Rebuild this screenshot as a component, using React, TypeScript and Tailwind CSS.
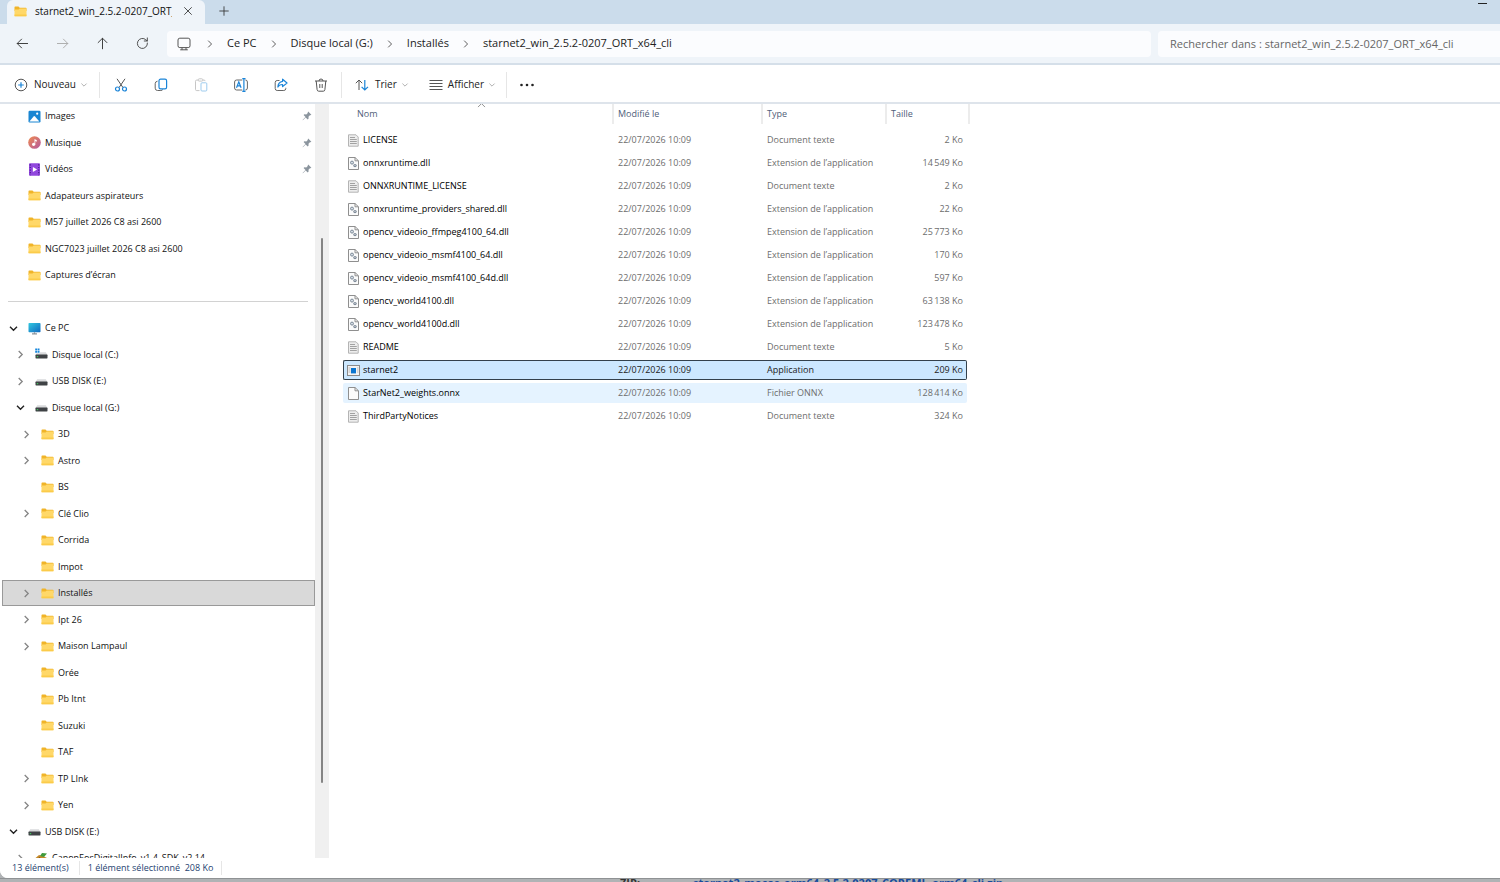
import type { ReactNode } from 'react'

type TreeItem = {
  label: string
  icon: 'images' | 'music' | 'video' | 'folder' | 'pc' | 'system' | 'drive' | 'canon'
  level?: number
  state?: 'open' | 'closed'
  pinned?: boolean
  selected?: boolean
}

const quickAccess: TreeItem[] = [
  { label: 'Images', icon: 'images', pinned: true },
  { label: 'Musique', icon: 'music', pinned: true },
  { label: 'Vidéos', icon: 'video', pinned: true },
  { label: 'Adapateurs aspirateurs', icon: 'folder' },
  { label: 'M57 juillet 2026 C8 asi 2600', icon: 'folder' },
  { label: 'NGC7023 juillet 2026 C8 asi 2600', icon: 'folder' },
  { label: 'Captures d’écran', icon: 'folder' },
]

const tree: TreeItem[] = [
  { label: 'Ce PC', icon: 'pc', state: 'open' },
  { label: 'Disque local (C:)', icon: 'system', level: 1, state: 'closed' },
  { label: 'USB DISK (E:)', icon: 'drive', level: 1, state: 'closed' },
  { label: 'Disque local (G:)', icon: 'drive', level: 1, state: 'open' },
  { label: '3D', icon: 'folder', level: 2, state: 'closed' },
  { label: 'Astro', icon: 'folder', level: 2, state: 'closed' },
  { label: 'BS', icon: 'folder', level: 2 },
  { label: 'Clé Clio', icon: 'folder', level: 2, state: 'closed' },
  { label: 'Corrida', icon: 'folder', level: 2 },
  { label: 'Impot', icon: 'folder', level: 2 },
  { label: 'Installés', icon: 'folder', level: 2, state: 'closed', selected: true },
  { label: 'Ipt 26', icon: 'folder', level: 2, state: 'closed' },
  { label: 'Maison Lampaul', icon: 'folder', level: 2, state: 'closed' },
  { label: 'Orée', icon: 'folder', level: 2 },
  { label: 'Pb Itnt', icon: 'folder', level: 2 },
  { label: 'Suzuki', icon: 'folder', level: 2 },
  { label: 'TAF', icon: 'folder', level: 2 },
  { label: 'TP LInk', icon: 'folder', level: 2, state: 'closed' },
  { label: 'Yen', icon: 'folder', level: 2, state: 'closed' },
  { label: 'USB DISK (E:)', icon: 'drive', state: 'open' },
  { label: 'CanonEosDigitalInfo_v1.4_SDK_v2.14', icon: 'canon', level: 1, state: 'closed' },
]

const TEXT = 'Document texte'
const DLL = 'Extension de l’application'

const files = [
  { name: 'LICENSE', type: TEXT, size: '2 Ko' },
  { name: 'onnxruntime.dll', type: DLL, size: '14\u2009549 Ko' },
  { name: 'ONNXRUNTIME_LICENSE', type: TEXT, size: '2 Ko' },
  { name: 'onnxruntime_providers_shared.dll', type: DLL, size: '22 Ko' },
  { name: 'opencv_videoio_ffmpeg4100_64.dll', type: DLL, size: '25\u2009773 Ko' },
  { name: 'opencv_videoio_msmf4100_64.dll', type: DLL, size: '170 Ko' },
  { name: 'opencv_videoio_msmf4100_64d.dll', type: DLL, size: '597 Ko' },
  { name: 'opencv_world4100.dll', type: DLL, size: '63\u2009138 Ko' },
  { name: 'opencv_world4100d.dll', type: DLL, size: '123\u2009478 Ko' },
  { name: 'README', type: TEXT, size: '5 Ko' },
  { name: 'starnet2', type: 'Application', size: '209 Ko' },
  { name: 'StarNet2_weights.onnx', type: 'Fichier ONNX', size: '128\u2009414 Ko' },
  { name: 'ThirdPartyNotices', type: TEXT, size: '324 Ko' },
]

function Line({ d, size = 14, className = '' }: { d: string; size?: number; className?: string }) {
  return (
    <svg width={size} height={size} viewBox="0 0 14 14" fill="none" stroke="currentColor" strokeLinecap="round" strokeLinejoin="round" className={`shrink-0 ${className}`}>
      <path d={d} />
    </svg>
  )
}

function FolderIcon() {
  return (
    <svg width="13" height="13" viewBox="0 0 13 13" className="shrink-0">
      <path d="M.5 2.2q0-.7.7-.7h3.3l1.2 1.3h6.1q.7 0 .7.7V6H.5z" fill="#f0b429" />
      <path d="M.5 4.6h4l1.2-1.2h6.8v7.3q0 .6-.7.6H1.2q-.7 0-.7-.6z" fill="#ffd869" />
      <path d="M.5 9.5h12v1.2q0 .6-.7.6H1.2q-.7 0-.7-.6z" fill="#fbcb4a" />
    </svg>
  )
}

function DriveIcon({ system = false }: { system?: boolean }) {
  return (
    <svg width="13" height="13" viewBox="0 0 13 13" className="shrink-0">
      <path d="M2.2 4.2h8.6l1.7 3H.5z" fill="#d9dadc" />
      <rect x=".5" y="6.6" width="12" height="3.8" rx=".6" fill="#3f4245" />
      <rect x="1.8" y="8" width="1.4" height="1.2" fill="#3fc35a" />
      {system && (
        <>
          <path d="M0 0h5v5.2H0z" fill="#fff" />
          <path d="M.2.4h1.9v1.9H.2zM2.6.4h1.9v1.9H2.6zM.2 2.8h1.9v1.9H.2zM2.6 2.8h1.9v1.9H2.6z" fill="#1787dc" />
        </>
      )}
    </svg>
  )
}

function TreeIcon({ icon }: { icon: TreeItem['icon'] }) {
  if (icon === 'folder') return <FolderIcon />
  if (icon === 'drive') return <DriveIcon />
  if (icon === 'system') return <DriveIcon system />
  if (icon === 'images')
    return (
      <svg width="13" height="13" viewBox="0 0 13 13" className="shrink-0">
        <rect x=".5" y=".7" width="12" height="11.8" rx="1.2" fill="#1a86d2" />
        <path d="M1.4 11.6 5.6 6.4q.7-.8 1.4 0l4.4 5.2z" fill="#fff" />
        <circle cx="9.2" cy="3.7" r="1.1" fill="#fff" />
      </svg>
    )
  if (icon === 'music')
    return (
      <svg width="13" height="13" viewBox="0 0 13 13" className="shrink-0">
        <defs>
          <linearGradient id="music" x1="0" y1="0" x2="1" y2="1">
            <stop offset="0" stopColor="#ef8b50" />
            <stop offset="1" stopColor="#b3589f" />
          </linearGradient>
        </defs>
        <circle cx="6.5" cy="6.5" r="6.3" fill="url(#music)" />
        <circle cx="5.6" cy="8.3" r="1.6" fill="#fff" />
        <path d="M6.5 8.3V3l2.3 1.3v1.4L7.3 5v3.3z" fill="#fff" />
      </svg>
    )
  if (icon === 'video')
    return (
      <svg width="13" height="13" viewBox="0 0 13 13" className="shrink-0">
        <rect x="1" y=".3" width="11" height="12.4" rx="1" fill="#9148dd" />
        <path d="M2.3 1.3v11M10.7 1.3v11" stroke="#4c1a91" strokeWidth="1.2" strokeDasharray="1.2 1.4" />
        <path d="m4.9 4.1 4.2 2.4-4.2 2.4z" fill="#fff" />
      </svg>
    )
  if (icon === 'pc')
    return (
      <svg width="13" height="13" viewBox="0 0 13 13" className="shrink-0">
        <defs>
          <linearGradient id="pc" x1="0" y1="0" x2="1" y2="1">
            <stop offset="0" stopColor="#32c8e0" />
            <stop offset="1" stopColor="#1068c0" />
          </linearGradient>
        </defs>
        <rect x=".5" y="1" width="12" height="9.3" rx=".7" fill="url(#pc)" />
        <path d="M4 11.8h5M6.5 10.3v1.2" stroke="#8b949c" strokeWidth="1.2" />
      </svg>
    )
  return (
    <svg width="13" height="13" viewBox="0 0 13 13" className="shrink-0">
      <path d="M.5 6 4 3l4 1 4 2-1 5H2z" fill="#c58a2a" />
      <path d="m5 4 2-3 5 .4L9 5z" fill="#3f9b3c" />
      <path d="m2 7 3-2 1 4z" fill="#6b4316" />
    </svg>
  )
}

function FileIcon({ type }: { type: string }) {
  if (type === 'Application')
    return (
      <svg width="13" height="13" viewBox="0 0 13 13" className="shrink-0">
        <rect x=".5" y="1.5" width="12" height="10" fill="#f4f4f4" stroke="#8b8b8b" />
        <path d="M1.5 4h2M1.5 6h2M1.5 8h2M10 4h1.5M10 6h1.5M10 8h1.5" stroke="#b9b9b9" />
        <rect x="4" y="4" width="5" height="5.4" fill="#0b76d0" />
      </svg>
    )
  if (type === TEXT)
    return (
      <svg width="13" height="13" viewBox="0 0 13 13" className="shrink-0">
        <path d="M1.5.8H9l2.2 2.2v9.2H1.5z" fill="#ededed" stroke="#b4b4b4" />
        <path d="M3 3.5h5M3 5.5h6.8M3 7.5h6.8M3 9.5h6.8" stroke="#a2a2a2" />
      </svg>
    )
  return (
    <svg width="13" height="13" viewBox="0 0 13 13" className="shrink-0">
      <path d="M1.5.5H8l3.5 3.3v8.7h-10z" fill="#fbfbfb" stroke="#8f8f8f" />
      <path d="M8 .5v3.3h3.5" fill="none" stroke="#8f8f8f" />
      {type === DLL && (
        <>
          <circle cx="5" cy="5.6" r="1.5" fill="#d5dde5" stroke="#7d8a98" />
          <circle cx="8" cy="8.6" r="1.7" fill="#7d8a98" />
          <circle cx="8" cy="8.6" r=".5" fill="#fff" />
        </>
      )}
    </svg>
  )
}

function Caret({ state }: { state?: 'open' | 'closed' }) {
  return (
    <span className="flex w-3 shrink-0 justify-center">
      {state === 'open' && (
        <svg width="9" height="9" viewBox="0 0 9 9" fill="none" stroke="#222" strokeWidth="1.4">
          <path d="m1 2.7 3.5 3.5L8 2.7" />
        </svg>
      )}
      {state === 'closed' && (
        <svg width="9" height="9" viewBox="0 0 9 9" fill="none" stroke="#858585" strokeWidth="1.3">
          <path d="m2.7 1 3.5 3.5L2.7 8" />
        </svg>
      )}
    </span>
  )
}

function TreeRow({ item }: { item: TreeItem }) {
  const indent = item.level === 2 ? 'pl-[17px]' : item.level === 1 ? 'pl-[11px]' : 'pl-1'
  return (
    <li className="h-[26px] even:h-[27px]">
      <button
        className={`flex h-full w-full items-center border pr-0.5 text-left whitespace-nowrap ${indent} ${
          item.selected ? 'border-[#999] bg-[#d9d9d9]' : 'border-transparent'
        }`}
      >
        <Caret state={item.state} />
        <span className="ml-[9px] flex">
          <TreeIcon icon={item.icon} />
        </span>
        <span className="ml-1 grow">{item.label}</span>
        {item.pinned && (
          <svg width="10" height="10" viewBox="0 0 10 10" fill="#8b959e">
            <path d="M6.2.6 9.4 3.8l-1 .5-.5-.1-1.4 1.5.1 1.9-.9.8-2-2L.9 9.3.6 9l2.9-2.9-1.9-2 .8-.8 1.9.1L5.8 2l-.1-.5z" />
          </svg>
        )}
      </button>
    </li>
  )
}

function NavButton({ label, children }: { label: string; children: ReactNode }) {
  return (
    <button aria-label={label} className="flex h-8 w-10 shrink-0 items-center justify-center">
      {children}
    </button>
  )
}

function Crumb({ children }: { children: ReactNode }) {
  return (
    <li className="flex items-center">
      <Line d="M5.2 3.4 8.8 7l-3.6 3.6" size={12} className="mx-[11px] text-[#444]" />
      <a href="#">{children}</a>
    </li>
  )
}

function Separator() {
  return <span className="h-[26px] w-px shrink-0 bg-[#e6e6e6]" />
}

function SmallChevron() {
  return <Line d="m3 5 4 4 4-4" size={8} className="text-[#777]" />
}

function Toolbar() {
  return (
    <div className="flex h-[37px] shrink-0 items-center bg-white pt-0.5 text-[10px] text-[#222]">
      <button className="flex w-[99px] shrink-0 items-center pl-[14px]">
        <svg width="14" height="14" viewBox="0 0 14 14" fill="none">
          <circle cx="7" cy="7" r="5.8" stroke="#555" />
          <path d="M7 4.2v5.6M4.2 7h5.6" stroke="#1a84d8" strokeWidth="1.2" />
        </svg>
        <span className="mr-1 ml-1.5">Nouveau</span>
        <SmallChevron />
      </button>
      <Separator />
      <div className="flex pl-px">
        <NavButton label="Couper">
          <svg width="14" height="14" viewBox="0 0 14 14" fill="none">
            <path d="M3 .8 9 9.6M11 .8 5 9.6" stroke="#555" />
            <circle cx="3.5" cy="11" r="2" stroke="#1a84d8" strokeWidth="1.2" />
            <circle cx="10.5" cy="11" r="2" stroke="#1a84d8" strokeWidth="1.2" />
          </svg>
        </NavButton>
        <NavButton label="Copier">
          <svg width="14" height="14" viewBox="0 0 14 14" fill="none">
            <path d="M3.5 3.2Q1.2 3.5 1.2 5.6v4.6q0 2.3 2.4 2.3h3.2q1.4 0 2-1" stroke="#666" />
            <rect x="5" y="1.2" width="7.6" height="9.6" rx="1.6" stroke="#1a84d8" strokeWidth="1.2" />
          </svg>
        </NavButton>
        <NavButton label="Coller">
          <svg width="14" height="14" viewBox="0 0 14 14" fill="none">
            <path d="M5.5 12.6H2.7q-1.2 0-1.2-1.2V3.3q0-1.2 1.2-1.2h1.5m4.6 0h1.3q1 0 1 1" stroke="#c6c6c6" />
            <rect x="4.2" y=".8" width="4.6" height="2.3" rx="1" stroke="#c6c6c6" />
            <rect x="7" y="4.8" width="5.8" height="8.2" rx="1" stroke="#9dcbee" />
          </svg>
        </NavButton>
        <NavButton label="Renommer">
          <svg width="14" height="14" viewBox="0 0 14 14" fill="none">
            <path d="M8.3 2H2.6Q.6 2 .6 4v6q0 2 2 2h5.7M11.4 2q2 0 2 2v6q0 2-2 2" stroke="#666" />
            <path d="M8.3.6h3.2M9.9.6v12.8M8.3 13.4h3.2" stroke="#1a84d8" strokeWidth="1.2" />
            <path d="m2.5 9.7 2.3-5.8 2.3 5.8M3.3 7.8h3" stroke="#1a84d8" strokeWidth="1.2" />
          </svg>
        </NavButton>
        <NavButton label="Partager">
          <svg width="14" height="14" viewBox="0 0 14 14" fill="none">
            <path d="M5.5 2.5H3.2q-2 0-2 2v6q0 2 2 2h6.6q2 0 2-2v-.7" stroke="#666" />
            <path d="M8.6 1.2 13 5 8.6 8.6V6.5Q5.3 6.4 3.9 9 4.1 4 8.6 3.3z" stroke="#1a84d8" strokeWidth="1.2" strokeLinejoin="round" />
          </svg>
        </NavButton>
        <NavButton label="Supprimer">
          <svg width="14" height="14" viewBox="0 0 14 14" fill="none" stroke="#555">
            <path d="M1 3h12M5 3q0-2 2-2t2 2M2.2 3l.9 8.6q.2 1.6 1.6 1.6h4.6q1.4 0 1.6-1.6l.9-8.6M5.8 6v4M8.2 6v4" />
          </svg>
        </NavButton>
      </div>
      <Separator />
      <button className="flex items-center pl-[13px]">
        <svg width="14" height="14" viewBox="0 0 14 14" fill="none">
          <path d="M4 12V2M.8 5.2 4 2l3.2 3.2" stroke="#555" />
          <path d="M9.8 2v10M6.6 8.8 9.8 12 13 8.8" stroke="#1a84d8" strokeWidth="1.2" />
        </svg>
        <span className="mr-1 ml-1.5">Trier</span>
        <SmallChevron />
      </button>
      <button className="mr-2.5 ml-5 flex items-center">
        <svg width="14" height="14" viewBox="0 0 14 14" stroke="#555">
          <path d="M.5 2.5h13M.5 5.5h13M.5 8.5h13M.5 11.5h13" />
        </svg>
        <span className="mr-1 ml-[5px]">Afficher</span>
        <SmallChevron />
      </button>
      <Separator />
      <NavButton label="Plus d'options">
        <svg width="14" height="4" viewBox="0 0 14 4" fill="#222">
          <circle cx="1.5" cy="2" r="1.3" />
          <circle cx="7" cy="2" r="1.3" />
          <circle cx="12.5" cy="2" r="1.3" />
        </svg>
      </NavButton>
    </div>
  )
}

function Sidebar() {
  return (
    <aside className="flex w-[330px] shrink-0 overflow-hidden text-[9px] text-[#111]">
      <ul className="-mt-px w-[315px] shrink-0 pl-0.5">
        {quickAccess.map((item) => (
          <TreeRow key={item.label} item={item} />
        ))}
        <li className="flex h-[26px] items-center pr-[7px] pl-1.5 even:h-[27px]">
          <hr className="w-full border-[#d2d2d2]" />
        </li>
        {tree.map((item, i) => (
          <TreeRow key={i} item={item} />
        ))}
      </ul>
      <div className="flex w-[14px] flex-col items-center bg-[#f0f0f0]">
        <div className="mt-[134px] h-[545px] w-0.5 rounded-full bg-[#858585]" />
      </div>
    </aside>
  )
}

function FileTable() {
  return (
    <main className="grow overflow-hidden pl-[13px]">
      <table className="-mt-[3px] w-[627px] table-fixed border-separate border-spacing-x-0 border-spacing-y-[3px] text-[9px] leading-[18px]">
        <colgroup>
          <col className="w-[271px]" />
          <col className="w-[149px]" />
          <col className="w-[124px]" />
          <col className="w-[80px]" />
          <col className="w-[3px]" />
        </colgroup>
        <thead>
          <tr className="h-[23px] text-left align-top text-[#4f6079]">
            <th className="relative p-0 font-normal">
              <button className="block h-5 w-full border-r-2 border-[#ececec] pl-[14px] text-left">Nom</button>
              <Line d="m2 9 5-5 5 5" size={9} className="absolute top-[-3px] left-[134px] text-[#555]" />
            </th>
            <th className="p-0 font-normal">
              <button className="block h-5 w-full border-r-2 border-[#ececec] pl-1 text-left">Modifié le</button>
            </th>
            <th className="p-0 font-normal">
              <button className="block h-5 w-full border-r-2 border-[#ececec] pl-1 text-left">Type</button>
            </th>
            <th colSpan={2} className="p-0 font-normal">
              <button className="block h-5 w-full border-r-2 border-[#ececec] pl-1 text-left">Taille</button>
            </th>
          </tr>
        </thead>
        <tbody>
          {files.map((file) => {
            const selected = file.name === 'starnet2'
            const hovered = file.name === 'StarNet2_weights.onnx'
            const cell = selected
              ? 'h-5 p-0 border-y border-[#33414c] bg-[#cce8ff] text-[#222]'
              : hovered
                ? 'h-5 p-0 border-y border-transparent bg-[#e5f3ff] text-[#6d6d6d]'
                : 'h-5 p-0 border-y border-transparent text-[#6d6d6d]'
            return (
              <tr key={file.name}>
                <td className={`${cell} rounded-l-[2px] border-l`}>
                  <span className="flex items-center gap-[3px] pl-[3px] text-black">
                    <FileIcon type={file.type} />
                    {file.name}
                  </span>
                </td>
                <td className={`${cell} pl-1`}>22/07/2026 10:09</td>
                <td className={`${cell} pl-1 whitespace-nowrap`}>{file.type}</td>
                <td className={`${cell} rounded-r-[2px] border-r pr-[3px] text-right`}>{file.size}</td>
              </tr>
            )
          })}
        </tbody>
      </table>
    </main>
  )
}

export default function App() {
  return (
    <div className="flex h-screen flex-col overflow-hidden bg-[#b0b3b5] font-['Open_Sans','Noto_Sans',sans-serif]">
      <div className="flex min-h-0 grow flex-col overflow-hidden rounded-bl-lg bg-white">
        <header className="flex h-6 shrink-0 items-end bg-[#cbdceb] pl-[7px] text-[10px] text-[#111]">
          <div className="flex h-6 w-[198px] items-center rounded-t-md bg-[#eff4f9] pb-0.5 pl-[7px]">
            <FolderIcon />
            <span className="ml-2 w-[137px] overflow-hidden whitespace-nowrap">starnet2_win_2.5.2-0207_ORT_x64_cli</span>
            <button aria-label="Fermer l'onglet" className="ml-2.5">
              <Line d="m3 3 8 8M11 3l-8 8" size={12} className="text-[#333]" />
            </button>
          </div>
          <button aria-label="Nouvel onglet" className="flex h-6 w-[38px] items-center justify-center pb-0.5">
            <Line d="M7 2v10M2 7h10" size={12} className="text-[#333]" />
          </button>
          <button aria-label="Réduire" className="mr-[13px] ml-auto flex h-6 items-start pt-[3px]">
            <span className="h-px w-[9px] bg-[#222]" />
          </button>
        </header>

        <div className="flex h-[41px] shrink-0 items-center border-b-2 border-[#d5dfe9] bg-[#eff4f9] pl-0.5 text-[11px] text-[#222]">
          <NavButton label="Précédent">
            <Line d="M12.5 7h-11M6 2.3 1.3 7 6 11.7" size={13} className="text-[#333]" />
          </NavButton>
          <NavButton label="Suivant">
            <Line d="M1.5 7h11M8 2.3 12.7 7 8 11.7" size={13} className="text-[#aaa]" />
          </NavButton>
          <NavButton label="Dossier parent">
            <Line d="M7 12.7v-11M2.3 6 7 1.3 11.7 6" size={13} className="text-[#333]" />
          </NavButton>
          <NavButton label="Actualiser">
            <Line d="M12.3 6.5A5.4 5.4 0 1 1 10.6 3l1.5 1.2M12.2 1v3.3H8.9" size={13} className="text-[#444]" />
          </NavButton>
          <nav aria-label="Chemin" className="ml-[5px] flex h-[26px] grow items-center gap-0.5 rounded bg-[#fbfcfe] pl-[10px]">
            <svg width="14" height="14" viewBox="0 0 14 14" fill="none" stroke="#555">
              <rect x="1" y="1.2" width="12" height="9.4" rx="1.8" />
              <path d="M5 10.8v2M9 10.8v2M3.2 12.8h7.6" />
            </svg>
            <ol className="flex whitespace-nowrap">
              <Crumb>Ce PC</Crumb>
              <Crumb>Disque local (G:)</Crumb>
              <Crumb>Installés</Crumb>
              <Crumb>starnet2_win_2.5.2-0207_ORT_x64_cli</Crumb>
            </ol>
          </nav>
          <input
            aria-label="Rechercher"
            placeholder="Rechercher dans : starnet2_win_2.5.2-0207_ORT_x64_cli"
            className="ml-[7px] h-[26px] w-[342px] shrink-0 rounded-l bg-[#fbfcfe] px-3 placeholder:text-[#666]"
          />
        </div>

        <Toolbar />

        <div className="flex min-h-0 grow border-t-2 border-[#dee4eb]">
          <Sidebar />
          <FileTable />
        </div>

        <footer className="flex h-5 shrink-0 items-center bg-white pl-3 text-[9px] text-[#24426f]">
          <span className="border-r border-[#e6e6e6] pr-2.5">13 élément(s)</span>
          <span className="border-r border-[#e6e6e6] px-2 whitespace-pre">1 élément sélectionné  208 Ko</span>
        </footer>
      </div>

      <div className="flex h-1 shrink-0 overflow-hidden border-t border-[#8f9294] pl-[620px] text-[11px] leading-[8px] font-bold">
        <span className="w-[73px] shrink-0 text-[#333]">ZIP:</span>
        <a href="#" className="whitespace-nowrap text-[#174a9c]">
          starnet2_macos_arm64_2.5.2-0207_COREML_arm64_cli.zip
        </a>
      </div>
    </div>
  )
}
